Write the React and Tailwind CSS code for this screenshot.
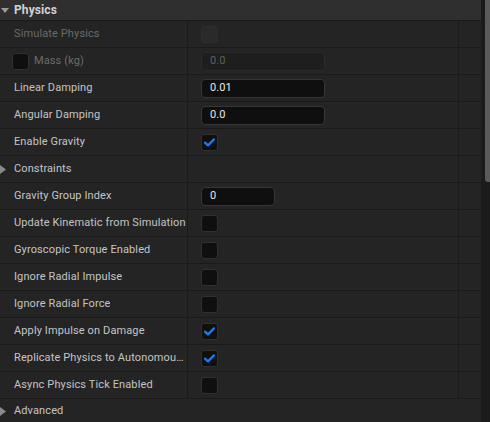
import React from "react";

const rows = [
  { label: "Simulate Physics", type: "check", disabled: true },
  { label: "Mass (kg)", type: "input", value: "0.0", disabled: true, toggle: true },
  { label: "Linear Damping", type: "input", value: "0.01" },
  { label: "Angular Damping", type: "input", value: "0.0" },
  { label: "Enable Gravity", type: "check", checked: true },
  { label: "Constraints", type: "group" },
  { label: "Gravity Group Index", type: "input", value: "0", short: true },
  { label: "Update Kinematic from Simulation", type: "check" },
  { label: "Gyroscopic Torque Enabled", type: "check" },
  { label: "Ignore Radial Impulse", type: "check" },
  { label: "Ignore Radial Force", type: "check" },
  { label: "Apply Impulse on Damage", type: "check", checked: true },
  { label: "Replicate Physics to Autonomous Proxy", type: "check", checked: true },
  { label: "Async Physics Tick Enabled", type: "check" },
];

const Check = () => (
  <svg width="11" height="9" viewBox="0 0 11 9" className="block">
    <path d="M1 4.6 L4 7.4 L10 1.4" fill="none" stroke="#1a7ef0" strokeWidth="2.2" strokeLinecap="round" strokeLinejoin="round" />
  </svg>
);

const Checkbox = ({ checked, disabled }) => (
  <div
    className={`w-[17px] h-[17px] rounded-[3px] border flex items-center justify-center ${
      disabled ? "bg-[#2a2a2a] border-[#2e2e2e]" : "bg-[#0f0f0f] border-[#303030]"
    }`}
  >
    {checked && <Check />}
  </div>
);

const Arrow = ({ down }) =>
  down ? (
    <svg width="8" height="6" viewBox="0 0 8 6" className="block">
      <path d="M0 0 L8 0 L4 5 Z" fill="#9a9a9a" />
    </svg>
  ) : (
    <svg width="6" height="9" viewBox="0 0 6 9" className="block">
      <path d="M0 0 L6 4.5 L0 9 Z" fill="#8a8a8a" />
    </svg>
  );

const Row = ({ row }) => {
  const labelColor = row.disabled ? "text-[#6b6b6b]" : "text-[#c4c4c4]";
  return (
    <div className="flex h-[27px] border-b border-[#1a1a1a]">
      <div className="relative w-[188px] shrink-0 border-r border-[#1a1a1a] flex items-center pl-[14px] min-w-0">
        {row.type === "group" && (
          <div className="absolute left-0 top-[9px]">
            <Arrow />
          </div>
        )}
        {row.toggle && (
          <div className="mr-[5px] -ml-[2px]">
            <Checkbox />
          </div>
        )}
        <span className={`truncate tracking-[0.12px] ${labelColor}`}>{row.label}</span>
      </div>
      <div className="w-[271px] shrink-0 border-r border-[#1a1a1a] flex items-center pl-[13px]">
        {row.type === "check" && <Checkbox checked={row.checked} disabled={row.disabled} />}
        {row.type === "input" && (
          <div
            className={`h-[19px] rounded-[4px] border flex items-center pl-[8px] tracking-[0.12px] ${
              row.short ? "w-[74px]" : "w-[124px]"
            } ${
              row.disabled
                ? "bg-[#1e1e1e] border-[#2a2a2a] text-[#5e5e5e]"
                : "bg-[#0f0f0f] border-[#363636] text-[#e8e8e8]"
            }`}
          >
            {row.value}
          </div>
        )}
      </div>
      <div className="flex-1" />
    </div>
  );
};

export default function App() {
  return (
    <div
      className="w-[490px] h-[422px] overflow-hidden flex bg-[#242424] text-[11px]"
      style={{ fontFamily: "Roboto, 'Noto Sans', sans-serif" }}
    >
      <div className="w-[481px] shrink-0 flex flex-col">
        <div className="relative h-[21px] bg-[#2f2f2f] border-b border-[#1a1a1a] flex items-center pl-[14px]">
          <div className="absolute left-[1px] top-[8px]">
            <Arrow down />
          </div>
          <span className="font-bold text-[12px] tracking-[0.1px] text-[#d2d2d2]">Physics</span>
        </div>
        {rows.map((r) => (
          <Row key={r.label} row={r} />
        ))}
        <div className="relative h-[23px] flex items-center pl-[14px] pt-[2px]">
          <div className="absolute left-0 top-[8px]">
            <Arrow />
          </div>
          <span className="text-[#c4c4c4] tracking-[0.12px]">Advanced</span>
        </div>
      </div>
      <div className="flex-1 bg-[#1b1b1b] flex justify-end">
        <div className="w-[5px] h-[182px] bg-[#5a5a5a] rounded-bl-[3px]" />
      </div>
    </div>
  );
}
